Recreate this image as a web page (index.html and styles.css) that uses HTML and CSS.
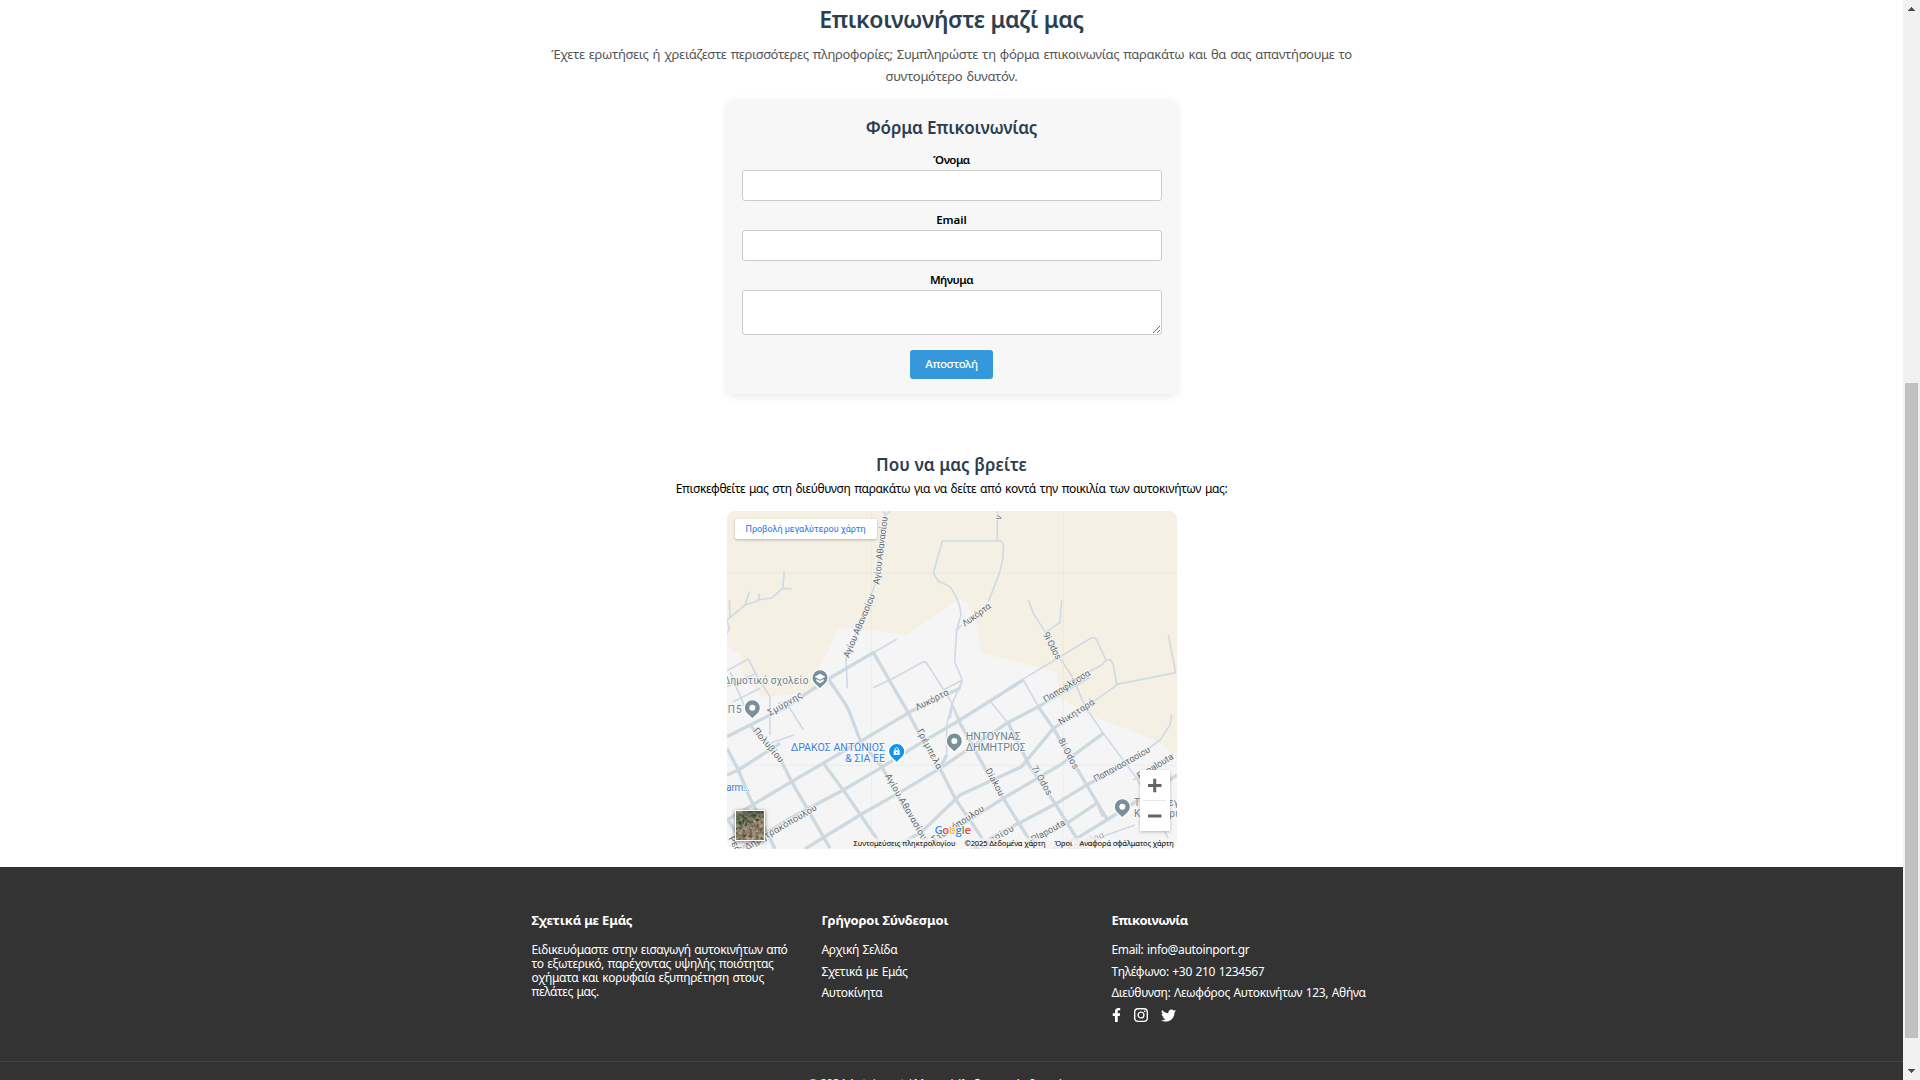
FILE: index.html
```html
<!DOCTYPE html>
<html lang="el">
<head>
<meta charset="utf-8">
<title>Επικοινωνία</title>
<link rel="stylesheet" href="styles.css">
</head>
<body>
<div class="page">
  <main class="content">
    <section class="contact">
      <h2>Επικοινωνήστε μαζί μας</h2>
      <p class="lead">Έχετε ερωτήσεις ή χρειάζεστε περισσότερες πληροφορίες; Συμπληρώστε τη φόρμα επικοινωνίας παρακάτω και θα σας απαντήσουμε το<br><span class="tight">συντομότερο δυνατόν.</span></p>
      <form class="card">
        <h3>Φόρμα Επικοινωνίας</h3>
        <label for="name">Όνομα</label>
        <input id="name" type="text">
        <label for="email" class="latin">Email</label>
        <input id="email" type="email">
        <label for="message">Μήνυμα</label>
        <textarea id="message"></textarea>
        <button type="button">Αποστολή</button>
      </form>
    </section>
    <section class="location">
      <h3>Που να μας βρείτε</h3>
      <p>Επισκεφθείτε μας στη διεύθυνση παρακάτω για να δείτε από κοντά την ποικιλία των αυτοκινήτων μας:</p>
      <div class="map">
        <svg viewBox="21 18 1350 1014" width="450" height="338">
          <rect x="21" y="18" width="1350" height="1014" fill="#f5f5f5"/>
          <path class="sand" d="M21 18H1371V760L1330 720L1280 695L1120 635L1015 578L1010 500L786 445L765 345L740 290L715 283L560 390L370 367L355 370L298 492L330 540L290 558L130 577L62 500V445L21 425Z"/>
          <path class="grid" d="M21 205H1371M21 781H1371M455 18V1032M1030 18V1032"/>
          <g class="minor">
            <path d="M21 345L75 300L115 288L118 265M75 300L88 260M112 285L155 279L188 250L193 200M188 250L215 252M28 285L30 335M21 345L28 370L21 385"/>
            <path d="M21 497L85 462L115 520L150 575V690M21 545L110 505M40 590L120 550M185 590L210 610L250 675M30 500L80 620M150 715L222 690"/>
            <path d="M488 18L497 30L510 18M495 30L490 60L465 240L455 265L378 460L382 550M460 443L530 403M460 548L520 520L610 470Q618 470 625 482L690 585L722 650"/>
            <path d="M832 18V108M667 108H840Q850 112 850 125L849 160L838 205L805 290M667 108L640 205L655 228L690 245Q722 290 723 330L710 375L704 470L727 525L695 600L680 660V750M727 525L670 555M690 640L698 600L715 650M710 375L725 360"/>
            <path d="M925 285L940 325L975 380L1020 460L1060 520L1095 605L1150 685L1250 820L1345 1000M1025 285L1020 352L980 380M810 588L880 540L1115 398Q1125 396 1130 405L1158 465L1172 464L1180 480L1190 538L1367 503L1345 390M1158 465L1145 480L1030 540M1190 538L1180 548L1120 590"/>
            <path d="M1240 825L1300 785L1360 750M1160 990L1245 960M1080 1020L1160 990M910 525L955 605M810 588L865 655M1280 735L1320 705L1350 660L1355 630M590 600L720 550L727 525"/>
          </g>
          <g class="road">
            <path d="M21 695L90 660L200 605L325 522L460 443L560 615L600 690L670 810L705 880L780 990L805 1032M325 522L375 595L388 620L420 705L485 785L560 920L640 1032"/>
            <path d="M21 945L215 830L420 710L580 615L720 550M21 810L55 795L180 715M60 1032L210 940L370 855L480 790L600 715L720 645L810 588L910 525"/>
            <path d="M255 1032L420 930L560 850L660 790L860 655L955 605L1110 515M510 1032L600 985L720 870L905 785L1000 670L1120 595"/>
            <path d="M620 1025L850 880L1020 780L1150 685M750 1032L1010 895L1100 840L1250 760M940 1010L1040 955L1130 895M1000 1032L1070 1000L1160 945L1280 870L1371 810"/>
            <path d="M90 660L185 770L215 830L330 1030M21 730L55 795L90 880L150 1000L165 1032M310 775L370 855L425 935L490 1030M21 940L60 1000"/>
            <path d="M715 645L795 790L850 880L900 960L945 1032M865 655L930 785L1005 895L1070 1000L1090 1032M955 605L1000 670L1100 840L1160 940M1130 890L1150 935M680 750L660 790"/>
          </g>
          <g class="lbl">
            <text transform="translate(478 239) rotate(-83)" textLength="205">Αγίου Αθανασίου</text>
            <text transform="translate(386 460) rotate(-67)" textLength="205">Αγίου Αθανασίου</text>
            <text transform="translate(842 46) rotate(-75)">ν</text>
            <text transform="translate(734 366) rotate(-36)" textLength="100">Λυκόρτα</text>
            <text transform="translate(968 388) rotate(62)" textLength="88">9i Odos</text>
            <text transform="translate(977 594) rotate(-32)" textLength="160">Παπαφλέσσα</text>
            <text transform="translate(1022 661) rotate(-32)" textLength="122">Νικηταρά</text>
            <text transform="translate(150 633) rotate(-30)" textLength="115">Σμύρνης</text>
            <text transform="translate(592 617) rotate(-27)" textLength="108">Λυκόρτα</text>
            <text transform="translate(98 678) rotate(50)" textLength="126">Πολυβίου</text>
            <text transform="translate(590 678) rotate(62)" textLength="132">Γρέμπελα</text>
            <text transform="translate(494 812) rotate(60)" textLength="225">Αγίου Αθανασίου</text>
            <text transform="translate(80 1036) rotate(-30)" textLength="245">Δημητρακόπουλου</text>
            <text transform="translate(25 1000) rotate(62)">Ρεά</text>
            <text transform="translate(795 796) rotate(61)" textLength="90">Diakou</text>
            <text transform="translate(933 788) rotate(60)" textLength="98">7i Odos</text>
            <text transform="translate(1014 706) rotate(62)" textLength="100">8i Odos</text>
            <text transform="translate(1127 832) rotate(-29)" textLength="190">Παπαναστασίου</text>
            <text transform="translate(1258 823) rotate(-31)" textLength="122">Papalouta</text>
            <text transform="translate(643 1014) rotate(-33)" textLength="180">Σταϊκόπουλου</text>
            <text transform="translate(768 1040) rotate(-29)" textLength="132">Κανασίου</text>
            <text transform="translate(940 1013) rotate(-29)" textLength="112">Plapouta</text>
            <text class="faint" transform="translate(1048 1040) rotate(-22)" textLength="115">Κοσσύρα</text>
          </g>
          <g class="place">
            <text x="10" y="536" textLength="255">Δημοτικό σχολείο</text>
            <text x="23" y="623" textLength="42">Π5</text>
            <text x="737" y="705" textLength="165" lengthAdjust="spacingAndGlyphs">ΗΝΤΟΥΝΑΣ</text>
            <text x="737" y="737" textLength="180" lengthAdjust="spacingAndGlyphs">ΔΗΜΗΤΡΙΟΣ</text>
            <text x="1242" y="904">Τ</text><text x="1345" y="904">εγ</text>
            <text x="1242" y="935">Κ</text><text x="1348" y="935">ρι</text>
            <g class="shop">
              <text x="212" y="737" textLength="283" lengthAdjust="spacingAndGlyphs">ΔΡΑΚΟΣ ΑΝΤΩΝΙΟΣ</text>
              <text x="376" y="770" textLength="119" lengthAdjust="spacingAndGlyphs">&amp; ΣΙΑ ΕΕ</text>
              <text x="19" y="857" textLength="71">arm...</text>
            </g>
          </g>
          <g class="pin">
            <path d="M300 552L283 536A24.500 24.500 0 1 1 317 536Z"/>
            <path d="M97 642L80 626A24.500 24.500 0 1 1 114 626Z"/>
            <path d="M703 742L686 726A24.500 24.500 0 1 1 720 726Z"/>
            <path d="M1207 939L1190 923A24.500 24.500 0 1 1 1224 923Z"/>
            <path class="blue" d="M530 773L513 757A24.500 24.500 0 1 1 547 757Z"/>
          </g>
          <g fill="#fff">
            <circle cx="97" cy="608" r="9"/><circle cx="703" cy="708" r="9"/><circle cx="1207" cy="905" r="9"/>
            <path d="M284 515L300 506L316 515L300 524ZM289 522L300 528L311 522V528L300 535L289 528Z"/>
            <path d="M521 736H539V750H521Z"/>
            <path d="M525 736V731Q530 724 535 731V736" fill="none" stroke="#fff" stroke-width="3"/>
          </g>
          <path d="M528 743H532" stroke="#0b96f5" stroke-width="4"/>
        </svg>
        <a class="larger">Προβολή μεγαλύτερου χάρτη</a>
        <div class="zoom">
          <svg viewBox="0 0 30 61" width="30" height="61"><path d="M8 15.500H21.500M14.700 8.800V22.200M8 46H21.500" stroke="#666" stroke-width="3"/><path d="M3 30.500H26" stroke="#e6e6e6"/></svg>
        </div>
        <div class="satellite">
          <svg viewBox="0 0 28 29" width="28" height="29">
            <defs><filter id="ground" x="0" y="0" width="1" height="1" color-interpolation-filters="sRGB"><feTurbulence type="fractalNoise" baseFrequency=".3" numOctaves="3" seed="8"/><feColorMatrix values="1 .3 0 0 -.15  .8 .5 0 0 -.18  .8 .3 0 0 -.16  0 0 0 0 1"/></filter></defs>
            <rect width="28" height="29" filter="url(#ground)"/>
            <path d="M0 0H28V6L18 9L10 14L0 15Z" fill="#3f5638" opacity=".4"/>
            <path d="M2 20L12 13L20 11L28 8V29H0Z" fill="#a08b74" opacity=".4"/>
          </svg>
        </div>
        <div class="google"><span class="b">G</span><span class="r">o</span><span class="y">o</span><span class="b">g</span><span class="g">l</span><span class="r">e</span></div>
        <div class="legal"><span class="keys">Συντομεύσεις πληκτρολογίου</span><span class="data">©2025 Δεδομένα χάρτη</span><span class="terms">Όροι</span><span class="report">Αναφορά σφάλματος χάρτη</span></div>
      </div>
    </section>
    <footer>
      <div class="columns">
        <div>
          <h4>Σχετικά με Εμάς</h4>
          <p>Ειδικευόμαστε στην εισαγωγή αυτοκινήτων από<br>το εξωτερικό, παρέχοντας υψηλής ποιότητας<br>οχήματα και κορυφαία εξυπηρέτηση στους<br>πελάτες μας.</p>
        </div>
        <div>
          <h4>Γρήγοροι Σύνδεσμοι</h4>
          <ul><li>Αρχική Σελίδα</li><li>Σχετικά με Εμάς</li><li>Αυτοκίνητα</li></ul>
        </div>
        <div>
          <h4 class="narrow">Επικοινωνία</h4>
          <ul><li>Email: info@autoinport.gr</li><li>Τηλέφωνο: +30 210 1234567</li><li>Διεύθυνση: Λεωφόρος Αυτοκινήτων 123, Αθήνα</li></ul>
          <div class="social">
            <svg viewBox="0 0 320 512" width="9" height="14"><path d="M279.140 288l14.220-92.660h-88.910v-60.130c0-25.350 12.420-50.060 52.240-50.060h40.420V6.260S260.430 0 225.360 0c-73.220 0-121.080 44.380-121.080 124.720v70.620H22.890V288h81.390v224h100.170V288z"/></svg>
            <svg viewBox="0 0 448 448" width="14" height="14"><rect x="22" y="22" width="404" height="404" rx="108" fill="none" stroke="#fff" stroke-width="44"/><circle cx="224" cy="224" r="94" fill="none" stroke="#fff" stroke-width="42"/><circle cx="344" cy="104" r="27"/></svg>
            <svg viewBox="0 0 512 512" width="15" height="15"><path d="M459.370 151.716c.325 4.548.325 9.097.325 13.645 0 138.720-105.583 298.558-298.558 298.558-59.452 0-114.680-17.219-161.137-47.106 8.447.974 16.568 1.299 25.340 1.299 49.055 0 94.213-16.568 130.274-44.832-46.132-.975-84.792-31.188-98.112-72.772 6.498.974 12.995 1.624 19.818 1.624 9.421 0 18.843-1.300 27.614-3.573-48.081-9.747-84.143-51.980-84.143-102.985v-1.299c13.969 7.797 30.214 12.670 47.431 13.319-28.264-18.843-46.781-51.005-46.781-87.391 0-19.492 5.197-37.360 14.294-52.954 51.655 63.675 129.300 105.258 216.365 109.807-1.624-7.797-2.599-15.918-2.599-24.040 0-57.828 46.782-104.934 104.934-104.934 30.213 0 57.502 12.670 76.670 33.137 23.715-4.548 46.456-13.320 66.599-25.340-7.798 24.366-24.366 44.833-46.132 57.827 21.117-2.273 41.584-8.122 60.426-16.243-14.292 20.791-32.161 39.308-52.628 54.253z"/></svg>
          </div>
        </div>
      </div>
      <div class="bottom">© 2024 Autoinport / Με επιφύλαξη παντός δικαιώματος</div>
    </footer>
  </main>
  <div class="scrollbar">
    <svg viewBox="0 0 17 17" width="17" height="17"><path d="M8 7H9V8H10V9H11V10H12V11H5V10H6V9H7V8H8Z"/></svg>
    <div class="track"><div class="thumb"></div></div>
    <svg viewBox="0 0 17 17" width="17" height="17"><path d="M5 6H12V7H11V8H10V9H9V10H8V9H7V8H6V7H5Z"/></svg>
  </div>
</div>
</body>
</html>
```
FILE: styles.css
```css
* { box-sizing: border-box; }
body { margin: 0; height: 1080px; overflow: hidden; background: #fff; color: #000; font: 12px/16px "Noto Sans", sans-serif; letter-spacing: -.25px; }
h2, h3, h4, p, ul { margin: 0; padding: 0; }
svg { display: block; }
.page { display: flex; height: 1080px; overflow: hidden; }
.content { flex: 1; height: 1080px; overflow: hidden; text-align: center; }
.contact { display: flex; flex-direction: column; align-items: center; padding-top: 4px; }
h2 { font-size: 23px; line-height: 30px; font-weight: 600; letter-spacing: -.3px; color: #2c3e50; }
h3 { font-size: 17px; line-height: 24px; font-weight: 600; letter-spacing: -.16px; color: #2c3e50; }
.lead { margin: 9px 0 13px; font-size: 13px; line-height: 22px; letter-spacing: -.32px; word-spacing: 1px; color: #555; white-space: nowrap; }
.lead .tight { letter-spacing: -.27px; }
.card { display: flex; flex-direction: column; align-items: center; width: 450px; height: 294px; padding: 16px 15px 15px; background: #f7f7f7; border-radius: 8px; box-shadow: 0 2px 8px rgba(0, 0, 0, .1); }
.card h3 { margin-bottom: 12px; }
label { margin-bottom: 2px; font-size: 11.500px; line-height: 16px; font-weight: 600; letter-spacing: -.5px; }
label.latin { letter-spacing: 0; }
input, textarea { display: block; width: 420px; border: 1px solid #ccc; border-radius: 3px; background: #fff; outline: none; }
input { height: 31px; margin-bottom: 11px; }
textarea { height: 45px; margin-bottom: 15px; resize: vertical; }
button { width: 83px; height: 29px; padding: 0 0 1px; border: 0; border-radius: 3px; background: #3498db; color: #fff; font: 500 11.500px/16px "Noto Sans", sans-serif; letter-spacing: -.35px; }
.location { display: flex; flex-direction: column; align-items: center; padding-top: 59px; }
.location h3 { letter-spacing: .08px; }
.location p { margin: 4px 0 14px; letter-spacing: -.37px; word-spacing: 1px; }
.map { position: relative; width: 450px; height: 338px; border-radius: 8px; overflow: hidden; }
.sand { fill: #f5f0e4; }
.grid { fill: none; stroke: #8a8a7a; stroke-opacity: .07; stroke-width: 3; }
.minor { fill: none; stroke: #d0d9e4; stroke-width: 5; stroke-linejoin: round; }
.road { fill: none; stroke: #cdd8df; stroke-width: 10; stroke-linejoin: round; }
.lbl text { font: 400 28px Roboto, sans-serif; letter-spacing: 0; fill: #5f6b75; stroke: #f7f7f5; stroke-width: 5; paint-order: stroke; }
.lbl .faint { opacity: .5; }
.place text { font: 400 30px Roboto, sans-serif; letter-spacing: 0; fill: #6b818c; stroke: #fafafa; stroke-width: 4; paint-order: stroke; }
.place .shop text { fill: #3b7de0; }
.pin path { fill: #78909c; stroke: #fff; stroke-width: 4; }
.pin .blue { fill: #0b96f5; }
.larger { position: absolute; left: 8px; top: 8px; width: 142px; height: 20px; border-radius: 2px; background: #fff; box-shadow: 0 1px 3px rgba(0, 0, 0, .25); color: #1a73e8; font: 9px/20px Roboto, sans-serif; letter-spacing: -.03px; }
.zoom { position: absolute; left: 413px; top: 259px; width: 30px; height: 61px; background: #fff; box-shadow: 0 1px 3px rgba(0, 0, 0, .25); }
.satellite { position: absolute; left: 8px; top: 299px; width: 30px; height: 31px; border: 1px solid #fff; box-shadow: 0 1px 4px rgba(0, 0, 0, .5); }
.google { position: absolute; left: 207px; top: 311px; width: 38px; font: 600 11.500px/16px "Open Sans", sans-serif; letter-spacing: -.4px; -webkit-text-stroke: 1.500px #fff; paint-order: stroke fill; }
.google .b { color: #4285f4; } .google .r { color: #ea4335; } .google .y { color: #fbbc04; } .google .g { color: #34a853; }
.legal { position: absolute; right: 0; bottom: 0; display: flex; gap: 9px; height: 11px; padding: 0 4px; background: rgba(245, 245, 245, .7); font-size: 7.500px; line-height: 11px; white-space: nowrap; }
.keys { width: 102px; letter-spacing: -.02px; } .data { width: 81px; letter-spacing: -.08px; } .terms { width: 16px; letter-spacing: -.1px; } .report { width: 93px; letter-spacing: -.13px; }
footer { margin-top: 18px; height: 230px; background: #333; color: #fff; text-align: left; }
.columns { display: grid; grid-template-columns: repeat(3, 290px); width: 870px; height: 194px; margin: 0 0 0 531.500px; padding-top: 44px; white-space: nowrap; }
h4 { margin-bottom: 13px; font-size: 13px; line-height: 18px; font-weight: 700; letter-spacing: -.18px; }
h4.narrow { letter-spacing: -.55px; }
.columns p { padding-top: 1px; line-height: 14px; letter-spacing: -.35px; word-spacing: .800px; }
ul { list-style: none; }
li { height: 21.700px; line-height: 15px; letter-spacing: -.34px; word-spacing: .800px; }
.social { display: flex; align-items: center; gap: 13px; height: 16px; fill: #fff; }
.bottom { border-top: 1px solid #444; padding-top: 13px; text-align: center; line-height: 16px; font-size: 11.500px; }
.scrollbar { display: flex; flex-direction: column; width: 17px; background: #f1f1f1; fill: #505050; }
.track { flex: 1; padding: 366px 2px 0; }
.thumb { height: 655px; background: #c1c1c1; }
```
